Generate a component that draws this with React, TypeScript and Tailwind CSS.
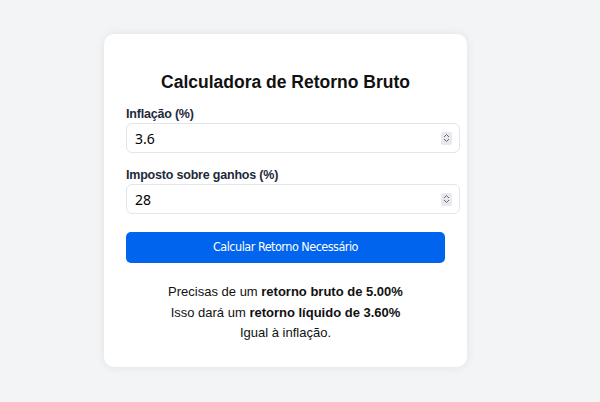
import React from 'react'

function Spinner() {
  return (
    <span className="flex h-[13px] w-[11px] flex-col items-center justify-center rounded-[2px] bg-[#e9e9ed]">
      <svg width="7" height="10" viewBox="0 0 7 10" fill="none" stroke="#5b6b7a" strokeWidth="1">
        <path d="M1 4 L3.5 1.5 L6 4" />
        <path d="M1 6 L3.5 8.5 L6 6" />
      </svg>
    </span>
  )
}

function NumberField({ label, value }: { label: string; value: string }) {
  return (
    <div className="flex flex-col">
      <label className="mb-[1px] text-[12.5px] font-bold leading-[16px] tracking-[-0.2px] text-[#1e293b]">{label}</label>
      <div className="flex h-[30px] w-[334px] items-center justify-between rounded-[6px] border border-[#e2e5e9] bg-white pl-[8px] pr-[7px]">
        <span className="text-[14px] text-black [font-family:'Noto_Sans',sans-serif]">{value}</span>
        <Spinner />
      </div>
    </div>
  )
}

export default function App() {
  return (
    <div className="min-h-[402px] bg-[#f3f4f6] pt-[34px] [font-family:'Liberation_Sans',Arial,sans-serif]">
      <div className="ml-[104px] flex w-[363px] flex-col rounded-[10px] bg-white px-[22px] pb-[23px] pt-[37px] shadow-[0_0_10px_rgba(0,0,0,0.08)]">
        <h1 className="text-center text-[17.5px] font-bold leading-[22px] text-[#111]">Calculadora de Retorno Bruto</h1>

        <div className="mt-[13px] flex flex-col gap-[14px]">
          <NumberField label="Inflação (%)" value="3.6" />
          <NumberField label="Imposto sobre ganhos (%)" value="28" />
        </div>

        <button className="mt-[18px] h-[31px] w-full rounded-[5px] bg-[#0064ef] text-[12.5px] tracking-[-0.5px] text-white [font-family:'DejaVu_Sans_Condensed','DejaVu_Sans',sans-serif]">
          Calcular Retorno Necessário
        </button>

        <div className="mt-[19px] text-center text-[13px] leading-[20.5px] text-[#111]">
          <p>
            Precisas de um <strong>retorno bruto de 5.00%</strong>
          </p>
          <p>
            Isso dará um <strong>retorno líquido de 3.60%</strong>
          </p>
          <p>Igual à inflação.</p>
        </div>
      </div>
    </div>
  )
}
